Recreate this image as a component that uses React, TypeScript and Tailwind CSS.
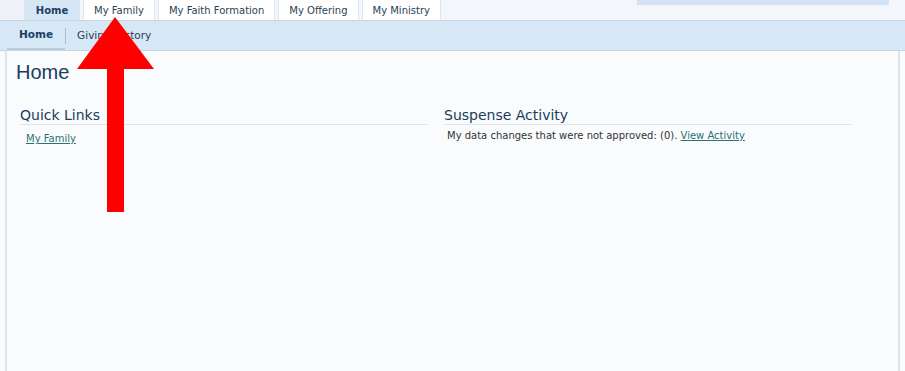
import React from "react";

const tabs = ["My Family", "My Faith Formation", "My Offering", "My Ministry"];

function Arrow() {
  // red pointer drawn on top of the screenshot
  return (
    <svg className="absolute left-[76px] top-[17px]" width="80" height="196" viewBox="0 0 80 196">
      <polygon points="39,0 78,52 48,52 48,195 31,195 31,52 1,52" fill="#ff0000" />
    </svg>
  );
}

export default function App() {
  return (
    <div className="relative w-[905px] h-[371px] overflow-hidden bg-[#f9fbfd] font-['DejaVu_Sans',sans-serif] text-[#333]">
      {/* top tabs */}
      <div className="flex h-[20px] bg-[#f3f6fb]">
        <div className="w-[24px] bg-[#eef2f8]" />
        <div className="flex items-end h-full">
          <div className="flex h-[20px] w-[56px] items-center justify-center bg-[#d6e6f4] text-[10px] font-bold text-[#1d4166]">Home</div>
          {tabs.map((t) => (
            <div
              key={t}
              className="ml-[3px] flex h-[20px] items-center border-x border-[#dfe5ec] bg-white px-[10px] text-[10px] text-[#2a3f55]"
            >
              {t}
            </div>
          ))}
        </div>
        <div className="ml-auto mr-[16px] h-[5px] w-[252px] bg-[#d4e3f3]" />
      </div>

      {/* sub nav */}
      <div className="flex h-[31px] items-center border-y border-[#c9d6e2] bg-[#d6e7f5] text-[10.5px]">
        <div className="ml-[7px] flex h-full items-center border-b-2 border-[#b6cbe0] px-[12px] font-bold text-[#1d4166]">Home</div>
        <div className="h-[16px] w-px bg-[#aebfcf]" />
        <div className="ml-[11px] text-[#2a3f55]">Giving History</div>
      </div>

      {/* body */}
      <div className="ml-[5px] mr-[5px] h-full border-x-2 border-[#dde4ec] bg-[#f9fbfd]">
        <div className="pl-[9px] pt-[9px] text-[20px] leading-[24px] text-[#1b3d5c] font-['Liberation_Sans',sans-serif]">Home</div>
        <div className="mt-[23px] flex pl-[13px]">
          <div className="w-[407px]">
            <div className="border-b border-[#dfe4ea] text-[14px] leading-[17px] text-[#1b3d5c]">Quick Links</div>
            <a className="mt-[6px] ml-[6px] block text-[10px] text-[#2b7373] underline">My Family</a>
          </div>
          <div className="ml-[17px] w-[407px]">
            <div className="border-b border-[#dfe4ea] text-[14px] leading-[17px] text-[#1b3d5c]">Suspense Activity</div>
            <div className="mt-[3px] ml-[3px] text-[10px] text-[#333]">
              My data changes that were not approved: (0).{" "}
              <a className="text-[#2b7373] underline">View Activity</a>
            </div>
          </div>
        </div>
      </div>

      <Arrow />
    </div>
  );
}
